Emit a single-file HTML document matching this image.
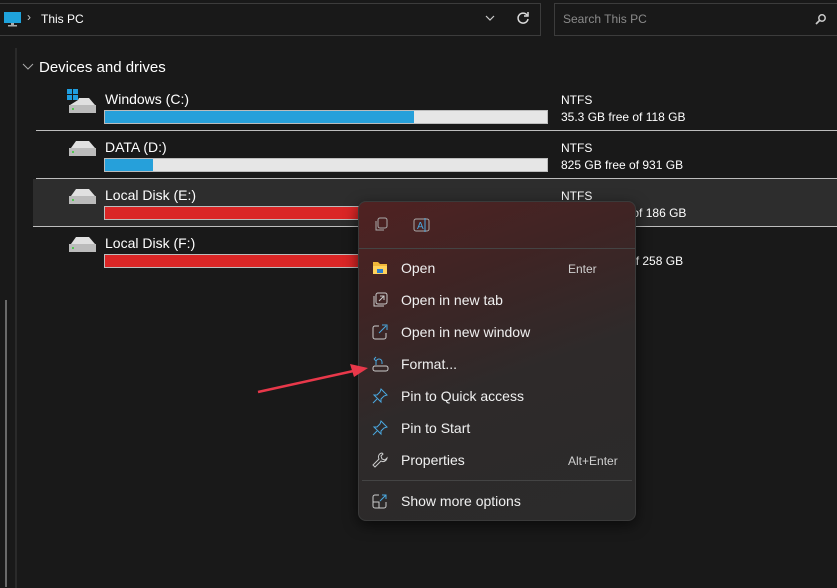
<!DOCTYPE html>
<html><head><style>
body{margin:0;width:837px;height:587px;background:#191919;font-family:"Liberation Sans",sans-serif;color:#fff;position:relative;overflow:hidden}
.a{position:absolute}
.t{font-size:14px;white-space:nowrap}
.s{font-size:12px;white-space:nowrap}
.bar{position:absolute;left:104px;width:442px;height:12px;background:#e6e6e6;border:1px solid #bcbcbc}
.bar i{display:block;height:100%}
.mi{position:absolute;left:401px;font-size:14px;color:#f0f0f0}
.sc{position:absolute;font-size:12px;color:#d0d0d0}
.ic{position:absolute;left:372px}
</style></head><body>
<div class="a" style="left:0;top:3px;width:541px;height:33px;border:1px solid #3c3c3c;border-left:none;box-sizing:border-box"></div>
<div class="a" style="left:554px;top:3px;width:290px;height:33px;border:1px solid #3c3c3c;box-sizing:border-box"></div>
<div class="a s" style="left:563px;top:12px;color:#8a8a8a">Search This PC</div>
<svg class="a" style="left:3px;top:11px" width="20" height="16"><rect x="1" y="1" width="17" height="11" fill="#1fa3dc"/><rect x="8" y="12" width="3" height="2" fill="#aaa"/><rect x="5" y="14" width="9" height="1.5" fill="#aaa"/></svg>
<div class="a s" style="left:27px;top:10px;color:#ccc">›</div>
<div class="a s" style="left:41px;top:12px">This PC</div>
<svg class="a" style="left:484px;top:13px" width="12" height="10"><path d="M2 3l4 4 4-4" stroke="#ccc" fill="none" stroke-width="1.2"/></svg>
<svg class="a" style="left:516px;top:11px" width="14" height="14"><path d="M11 4A5 5 0 1 0 12 8" stroke="#ddd" fill="none" stroke-width="1.5"/><path d="M12 1v4h-4" stroke="#ddd" fill="none" stroke-width="1.5"/></svg>
<svg class="a" style="left:815px;top:13px" width="12" height="12"><circle cx="7" cy="5" r="3.2" stroke="#ccc" fill="none" stroke-width="1.5"/><path d="M5 7L1 11" stroke="#ccc" stroke-width="1.7"/></svg>
<div class="a" style="left:15px;top:48px;width:2px;height:540px;background:#2a2a2a"></div>
<div class="a" style="left:5px;top:300px;width:2px;height:287px;background:#6a6a6a"></div>
<svg class="a" style="left:22px;top:61px" width="12" height="10"><path d="M1 3l5 5 5-5" stroke="#aaa" fill="none"/></svg>
<div class="a t" style="left:39px;top:59px;font-size:15px">Devices and drives</div>
<div class="a" style="left:36px;top:130px;width:801px;height:1px;background:#bdbdbd"></div>
<div class="a" style="left:36px;top:178px;width:801px;height:1px;background:#bdbdbd"></div>
<div class="a" style="left:33px;top:179px;width:804px;height:47px;background:#2d2d2d;border-bottom:1px solid #bdbdbd"></div>

<svg class="a" style="left:66px;top:88px" width="32" height="26"><rect x="1" y="1" width="5" height="5" fill="#1f9ee0"/><rect x="7" y="1" width="5" height="5" fill="#1f9ee0"/><rect x="1" y="7" width="5" height="5" fill="#1f9ee0"/><rect x="7" y="7" width="5" height="5" fill="#1f9ee0"/><path d="M12 12l1-2h10l6 7H4z" fill="#e0e0e0"/><rect x="3" y="17" width="27" height="8" fill="#bbb"/><circle cx="7" cy="21" r="1" fill="#3c3"/></svg>
<div class="a t" style="left:105px;top:91px">Windows (C:)</div>
<div class="bar" style="top:110px"><i style="width:309px;background:#26a0da"></i></div>
<div class="a s" style="left:561px;top:93px">NTFS</div><div class="a s" style="left:561px;top:110px">35.3 GB free of 118 GB</div>

<svg class="a" style="left:66px;top:138px" width="32" height="26"><path d="M5 10l5-7h13l6 7z" fill="#e0e0e0"/><rect x="3" y="10" width="27" height="8" fill="#bbb"/><circle cx="7" cy="14" r="1" fill="#3c3"/></svg>
<div class="a t" style="left:105px;top:139px">DATA (D:)</div>
<div class="bar" style="top:158px"><i style="width:48px;background:#26a0da"></i></div>
<div class="a s" style="left:561px;top:141px">NTFS</div><div class="a s" style="left:561px;top:158px">825 GB free of 931 GB</div>

<svg class="a" style="left:66px;top:186px" width="32" height="26"><path d="M5 10l5-7h13l6 7z" fill="#e0e0e0"/><rect x="3" y="10" width="27" height="8" fill="#bbb"/><circle cx="7" cy="14" r="1" fill="#3c3"/></svg>
<div class="a t" style="left:105px;top:187px">Local Disk (E:)</div>
<div class="bar" style="top:206px"><i style="width:400px;background:#da2626"></i></div>
<div class="a s" style="left:561px;top:189px">NTFS</div><div class="a s" style="left:561px;top:206px">93.1 GB free of 186 GB</div>

<svg class="a" style="left:66px;top:234px" width="32" height="26"><path d="M5 10l5-7h13l6 7z" fill="#e0e0e0"/><rect x="3" y="10" width="27" height="8" fill="#bbb"/><circle cx="7" cy="14" r="1" fill="#3c3"/></svg>
<div class="a t" style="left:105px;top:235px">Local Disk (F:)</div>
<div class="bar" style="top:254px"><i style="width:400px;background:#da2626"></i></div>
<div class="a s" style="left:561px;top:237px">NTFS</div><div class="a s" style="left:561px;top:254px">129 GB free of 258 GB</div>

<div class="a" style="left:358px;top:201px;width:278px;height:320px;border-radius:8px;background:linear-gradient(160deg,#502222 0%,#402424 25%,#2e2a2a 55%,#2b2b2b 100%);border:1px solid #3a3a3a;box-sizing:border-box;box-shadow:0 4px 14px rgba(0,0,0,.6)"></div>
<div class="a" style="left:359px;top:248px;width:276px;height:1px;background:#444"></div>
<div class="a" style="left:362px;top:480px;width:270px;height:1px;background:#444"></div>
<svg class="a" style="left:373px;top:217px" width="16" height="16"><rect x="5" y="1" width="9" height="10" rx="2" stroke="#aaa" fill="none"/><path d="M3 4v9h8" stroke="#aaa" fill="none"/></svg>
<svg class="a" style="left:413px;top:217px" width="18" height="16"><rect x="1" y="2" width="15" height="12" rx="2" stroke="#aaa" fill="none"/><text x="4" y="12" font-size="10" fill="#4aa8e0" font-family="Liberation Sans">A</text><path d="M12 1v14" stroke="#4aa8e0"/></svg>

<svg class="ic" style="top:260px" width="16" height="16"><path d="M1 2h5l2 2h7v10H1z" fill="#f0b73a"/><rect x="1" y="6" width="14" height="8" fill="#ffd35c"/><rect x="5" y="9" width="6" height="4" fill="#2a7fd0"/></svg>
<div class="mi" style="top:260px">Open</div><div class="sc" style="left:568px;top:262px">Enter</div>
<svg class="ic" style="top:292px" width="16" height="16"><rect x="4" y="1" width="11" height="11" rx="2" stroke="#ccc" fill="none"/><path d="M2 4v10h10" stroke="#ccc" fill="none"/><path d="M7 9l5-5M8 4h4v4" stroke="#ccc" fill="none"/></svg>
<div class="mi" style="top:292px">Open in new tab</div>
<svg class="ic" style="top:324px" width="16" height="16"><path d="M7 2H3a2 2 0 0 0-2 2v9a2 2 0 0 0 2 2h9a2 2 0 0 0 2-2V9" stroke="#ccc" fill="none"/><path d="M7 9l7-7M10 1h5v5" stroke="#4aa8e0" fill="none"/></svg>
<div class="mi" style="top:324px">Open in new window</div>
<svg class="ic" style="top:356px" width="18" height="16"><rect x="1" y="10" width="15" height="5" rx="2" stroke="#ccc" fill="none"/><path d="M4 9V6a3 3 0 0 1 6 0v2M2 3l2-2M2 3l2 2" stroke="#4aa8e0" fill="none"/></svg>
<div class="mi" style="top:356px">Format...</div>
<svg class="ic" style="top:388px" width="16" height="16"><path d="M9 1l6 6-3 1-3 3 0 3-7-7 3 0 3-3zM5 11l-4 4" stroke="#4aa8e0" fill="none"/></svg>
<div class="mi" style="top:388px">Pin to Quick access</div>
<svg class="ic" style="top:420px" width="16" height="16"><path d="M9 1l6 6-3 1-3 3 0 3-7-7 3 0 3-3zM5 11l-4 4" stroke="#4aa8e0" fill="none"/></svg>
<div class="mi" style="top:420px">Pin to Start</div>
<svg class="ic" style="top:452px" width="16" height="16"><path d="M10 1a4 4 0 0 0-3 6L1 13l2 2 6-6a4 4 0 0 0 6-3l-2 2-3-1-1-3 2-2z" stroke="#ccc" fill="none"/></svg>
<div class="mi" style="top:452px">Properties</div><div class="sc" style="left:568px;top:454px">Alt+Enter</div>
<svg class="ic" style="top:493px" width="16" height="16"><path d="M7 2H3a2 2 0 0 0-2 2v9a2 2 0 0 0 2 2h9a2 2 0 0 0 2-2V9M1 9h6v6" stroke="#ccc" fill="none"/><path d="M8 8l6-6M10 2h4v4" stroke="#4aa8e0" fill="none"/></svg>
<div class="mi" style="top:493px">Show more options</div>

<svg class="a" style="left:250px;top:360px" width="125" height="40"><path d="M8 32L108 10" stroke="#e8384a" stroke-width="2.5"/><path d="M118 8L100 4l4 13z" fill="#e8384a"/></svg>
</body></html>
